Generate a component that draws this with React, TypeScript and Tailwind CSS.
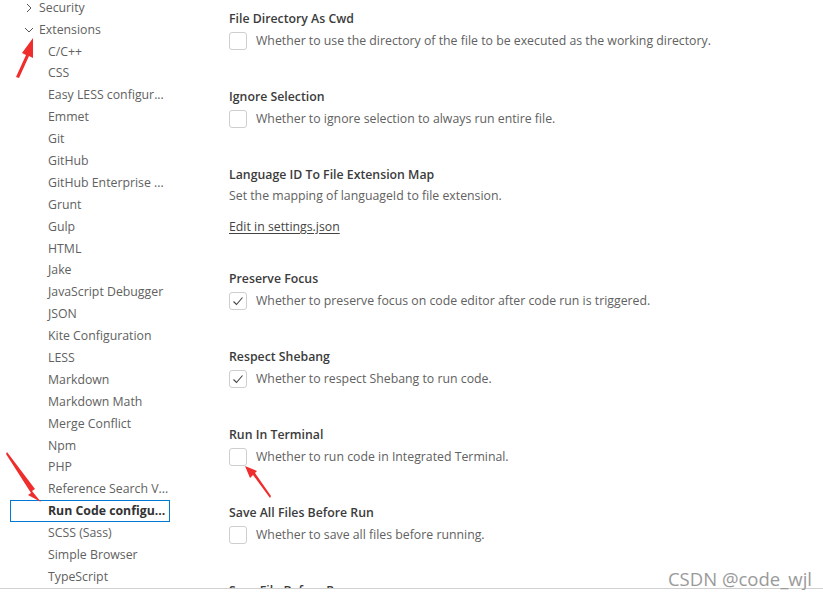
import React from "react";

const items = [
  "C/C++",
  "CSS",
  "Easy LESS configur...",
  "Emmet",
  "Git",
  "GitHub",
  "GitHub Enterprise ...",
  "Grunt",
  "Gulp",
  "HTML",
  "Jake",
  "JavaScript Debugger",
  "JSON",
  "Kite Configuration",
  "LESS",
  "Markdown",
  "Markdown Math",
  "Merge Conflict",
  "Npm",
  "PHP",
  "Reference Search V...",
];
const after = ["SCSS (Sass)", "Simple Browser", "TypeScript"];

function Chevron({ down }: { down?: boolean }) {
  return (
    <svg width="10" height="10" viewBox="0 0 10 10" className="mr-[5px]">
      {down ? (
        <path d="M1 3 L5 7 L9 3" fill="none" stroke="#555" strokeWidth="1" />
      ) : (
        <path d="M3 1 L7 5 L3 9" fill="none" stroke="#555" strokeWidth="1" />
      )}
    </svg>
  );
}

function Check({ checked }: { checked?: boolean }) {
  return (
    <div className="w-[18px] h-[18px] border border-[#cecece] rounded-[3px] bg-white flex items-center justify-center shrink-0">
      {checked && (
        <svg width="14" height="14" viewBox="0 0 14 14">
          <path d="M2.5 7.5 L5.5 10.5 L11.5 3.5" fill="none" stroke="#424242" strokeWidth="1.1" />
        </svg>
      )}
    </div>
  );
}

function Setting({ title, desc, checked }: { title: string; desc: string; checked?: boolean }) {
  return (
    <div className="h-[78px] shrink-0">
      <div className="h-[18px] leading-[18px] font-semibold text-[#3b3b3b]">{title}</div>
      <div className="mt-[4px] flex items-center h-[18px]">
        <Check checked={checked} />
        <span className="ml-[9px] text-[#616161] leading-[18px] whitespace-nowrap">{desc}</span>
      </div>
    </div>
  );
}

export default function App() {
  return (
    <div
      className="relative w-[823px] h-[603px] bg-white overflow-hidden text-[12.3px]"
      style={{ fontFamily: '"Open Sans", "Noto Sans", sans-serif' }}
    >
      <div className="h-[589px] border-b border-[#d0d0d0] overflow-hidden flex">
        <div className="w-[229px] shrink-0 flex flex-col -mt-[3px] text-[#616161] whitespace-nowrap">
          <div className="h-[22px] flex items-center pl-[24px]">
            <Chevron />
            <span>Security</span>
          </div>
          <div className="h-[22px] flex items-center pl-[24px]">
            <Chevron down />
            <span>Extensions</span>
          </div>
          {items.map((t) => (
            <div key={t} className="h-[22px] flex items-center pl-[48px]">
              {t}
            </div>
          ))}
          <div className="h-[22px] ml-[10px] w-[160px] border border-[#0078d4] flex items-center pl-[37px] font-bold text-[#333]">
            Run Code configu...
          </div>
          {after.map((t) => (
            <div key={t} className="h-[22px] flex items-center pl-[48px]">
              {t}
            </div>
          ))}
        </div>
        <div className="flex-1 flex flex-col pt-[10px]">
          <Setting
            title="File Directory As Cwd"
            desc="Whether to use the directory of the file to be executed as the working directory."
          />
          <Setting title="Ignore Selection" desc="Whether to ignore selection to always run entire file." />
          <div className="h-[104px] shrink-0">
            <div className="h-[18px] leading-[18px] font-semibold text-[#3b3b3b]">
              Language ID To File Extension Map
            </div>
            <div className="mt-[3px] h-[18px] leading-[18px] text-[#616161]">
              Set the mapping of languageId to file extension.
            </div>
            <div className="mt-[13px] h-[18px] leading-[18px] text-[#444] underline underline-offset-2">
              Edit in settings.json
            </div>
          </div>
          <Setting
            title="Preserve Focus"
            desc="Whether to preserve focus on code editor after code run is triggered."
            checked
          />
          <Setting title="Respect Shebang" desc="Whether to respect Shebang to run code." checked />
          <Setting title="Run In Terminal" desc="Whether to run code in Integrated Terminal." />
          <Setting title="Save All Files Before Run" desc="Whether to save all files before running." />
          <Setting title="Save File Before Run" desc="Whether to save the current file before running." />
        </div>
      </div>

      <svg className="absolute left-0 top-0 pointer-events-none" width="823" height="603">
        <g fill="#f02d2d" stroke="none">
          <polygon points="16,77 26,55 22,53 33,38 33,58 29,56 19,78" />
          <polygon points="7,452 35,489 32,491 41,502 28,495 31,493 6,454" />
          <polygon points="270,498 253,475 250,478 245,466 257,471 255,473 271,496" />
        </g>
      </svg>

      <div
        className="absolute right-[11px] top-[567px] text-[18.5px] leading-[24px] text-[#9a9a9a]"
        style={{ textShadow: "0 0 2px #fff" }}
      >
        CSDN @code_wjl
      </div>
    </div>
  );
}
